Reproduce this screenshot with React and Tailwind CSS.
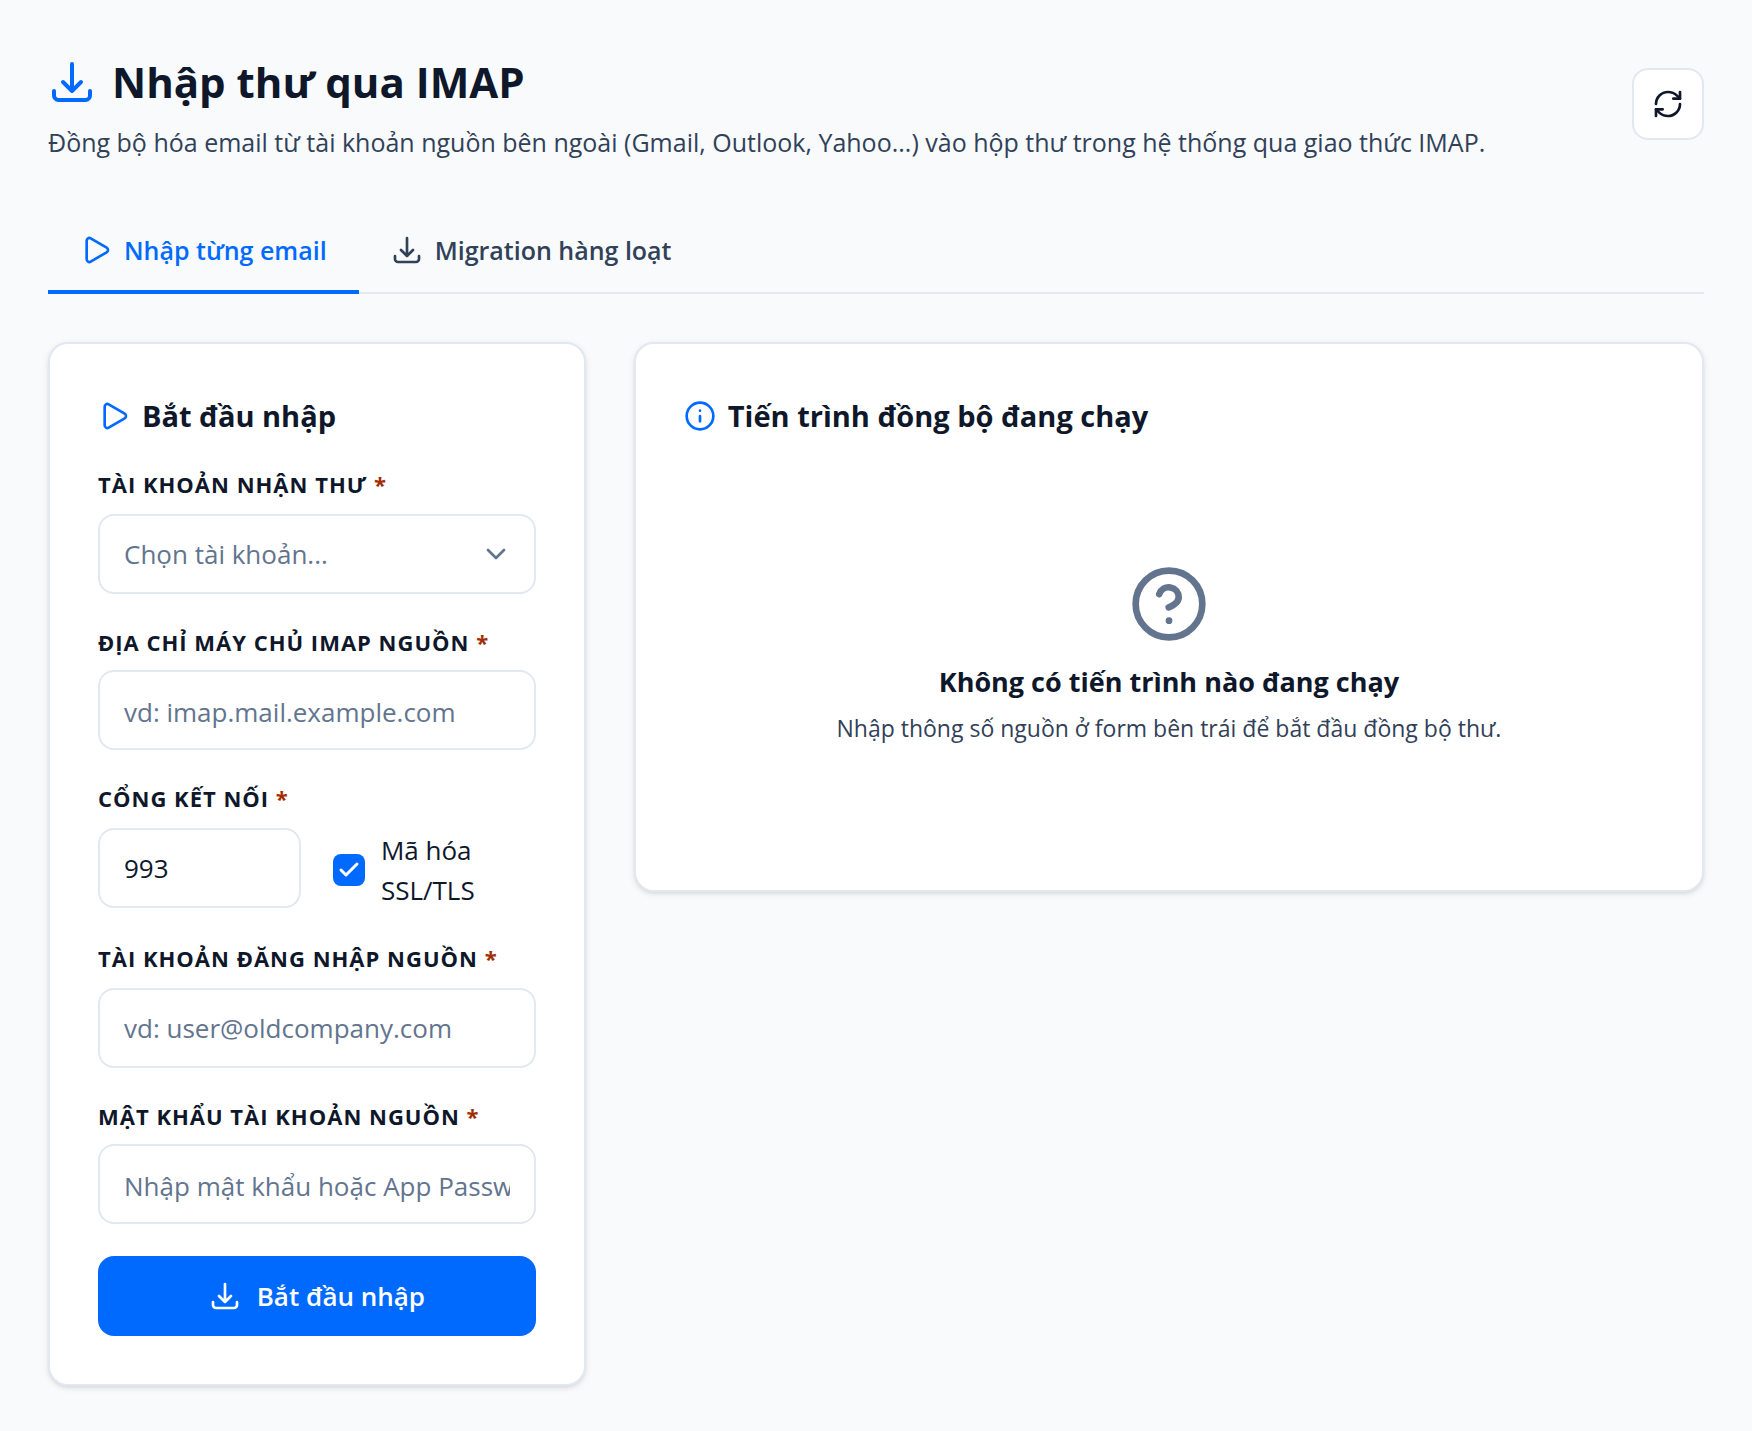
import React from "react";

function Svg({ size, sw = 2, children, className = "" }) {
  return (
    <svg width={size} height={size} viewBox="0 0 24 24" fill="none" stroke="currentColor" strokeWidth={sw} strokeLinecap="round" strokeLinejoin="round" className={"shrink-0 " + className} aria-hidden="true">
      {children}
    </svg>
  );
}
const Download = (p) => (
  <Svg {...p}>
    <path d="M3 16.5v2.25A2.25 2.25 0 0 0 5.25 21h13.5A2.25 2.25 0 0 0 21 18.75V16.5M16.5 12 12 16.5m0 0L7.5 12m4.5 4.5V3" />
  </Svg>
);
const Play = (p) => (
  <Svg {...p}>
    <path d="M5 5a2 2 0 0 1 3.008-1.728l11.997 6.998a2 2 0 0 1 .003 3.458l-12 7A2 2 0 0 1 5 19z" />
  </Svg>
);

function Label({ htmlFor, children }) {
  return (
    <label htmlFor={htmlFor} className="block text-[22px] leading-8 font-bold uppercase tracking-[1px] text-slate-900">
      {children} <span className="text-orange-800">*</span>
    </label>
  );
}
const field =
  "block h-20 w-full rounded-2xl border-2 border-slate-200 bg-white px-6 text-[26px] placeholder:text-slate-500 outline-none";
const card =
  "rounded-[20px] border-2 border-slate-200 bg-white p-12 shadow-[0_2px_6px_rgb(0_0_0/0.1),0_2px_4px_-2px_rgb(0_0_0/0.1)]";

export default function App() {
  return (
    <main className="min-h-screen bg-slate-50 px-12 pt-12 pb-11 font-['Open_Sans','Noto_Sans',sans-serif] text-slate-900">
      <header className="flex items-center justify-between">
        <div>
          <h1 className="flex items-center gap-4 text-[42px] leading-[68px] font-bold">
            <Download size={48} className="text-[#006aff]" />
            Nhập thư qua IMAP
          </h1>
          <p className="mt-2 text-[25px] leading-9 text-slate-700">
            Đồng bộ hóa email từ tài khoản nguồn bên ngoài (Gmail, Outlook, Yahoo...) vào hộp thư trong hệ thống qua giao thức IMAP.
          </p>
        </div>
        <button aria-label="Làm mới" className="flex size-18 items-center justify-center rounded-2xl border-2 border-slate-200 bg-white">
          <Svg size={32}>
            <path d="M3 12a9 9 0 0 1 9-9 9.75 9.75 0 0 1 6.74 2.74L21 8" />
            <path d="M21 3v5h-5" />
            <path d="M21 12a9 9 0 0 1-9 9 9.75 9.75 0 0 1-6.74-2.74L3 16" />
            <path d="M8 16H3v5" />
          </Svg>
        </button>
      </header>

      <nav className="mt-12 flex border-b-2 border-slate-200 text-[25px] leading-9 font-semibold">
        <button className="-mb-0.5 flex items-center gap-3 border-b-4 border-[#006aff] px-8 pt-6 pb-[22px] text-[#006aff]">
          <Play size={32} />
          Nhập từng email
        </button>
        <button className="-mb-0.5 flex items-center gap-3 border-b-4 border-transparent px-8 pt-6 pb-[22px] text-slate-700">
          <Download size={32} />
          Migration hàng loạt
        </button>
      </nav>

      <div className="mt-12 grid grid-cols-[minmax(0,1fr)_minmax(0,1.99fr)] items-start gap-12">
        <section className={card}>
          <h2 className="flex items-center gap-3 text-[29px] leading-12 font-bold">
            <Play size={32} className="text-[#006aff]" />
            Bắt đầu nhập
          </h2>
          <form className="mt-7 flex flex-col gap-8" onSubmit={(e) => e.preventDefault()}>
            <div className="flex flex-col gap-3.5">
              <Label htmlFor="acct">Tài khoản nhận thư</Label>
              <div className="relative">
                <select id="acct" className={field + " appearance-none text-slate-500"}>
                  <option>Chọn tài khoản...</option>
                </select>
                <Svg size={32} className="pointer-events-none absolute top-6 right-6 text-slate-500">
                  <path d="m6 9 6 6 6-6" />
                </Svg>
              </div>
            </div>
            <div className="flex flex-col gap-3">
              <Label htmlFor="host">Địa chỉ máy chủ IMAP nguồn</Label>
              <input id="host" placeholder="vd: imap.mail.example.com" className={field + " pt-1"} />
            </div>
            <div className="flex flex-col gap-3.5">
              <Label htmlFor="port">Cổng kết nối</Label>
              <div className="grid grid-cols-2 items-start gap-8">
                <input id="port" defaultValue="993" className={field} />
                <label className="flex items-center gap-4 pt-0.5 text-[26px] leading-10">
                  <span className="relative flex size-8 shrink-0">
                    <input type="checkbox" defaultChecked className="size-8 appearance-none rounded-lg bg-[#006aff]" />
                    <Svg size={24} sw={3} className="pointer-events-none absolute top-1 left-1 text-white">
                      <path d="M20 6 9 17l-5-5" />
                    </Svg>
                  </span>
                  Mã hóa SSL/TLS
                </label>
              </div>
            </div>
            <div className="flex flex-col gap-3.5">
              <Label htmlFor="user">Tài khoản đăng nhập nguồn</Label>
              <input id="user" placeholder="vd: user@oldcompany.com" className={field} />
            </div>
            <div className="flex flex-col gap-3">
              <Label htmlFor="pass">Mật khẩu tài khoản nguồn</Label>
              <input id="pass" type="password" placeholder="Nhập mật khẩu hoặc App Password" className={field + " pt-1"} />
            </div>
            <button className="flex h-20 w-full items-center justify-center gap-4 rounded-2xl bg-[#006aff] text-[26px] font-semibold text-white">
              <Download size={32} />
              Bắt đầu nhập
            </button>
          </form>
        </section>

        <section className={card}>
          <h2 className="flex items-center gap-3 text-[29px] leading-12 font-bold">
            <Svg size={32} className="text-[#006aff]">
              <circle cx="12" cy="12" r="10" />
              <path d="M12 12v4M12 8h.01" />
            </Svg>
            Tiến trình đồng bộ đang chạy
          </h2>
          <div className="flex flex-col items-center pt-31 pb-24 text-center">
            <Svg size={80} className="text-slate-500">
              <circle cx="12" cy="12" r="10" />
              <path d="M9.09 9a3 3 0 0 1 5.83 1c0 2-3 3-3 3M12 17h.01" />
            </Svg>
            <h3 className="mt-[18px] text-[27px] leading-10 font-bold">Không có tiến trình nào đang chạy</h3>
            <p className="mt-2 text-[23px] leading-9 text-slate-700">Nhập thông số nguồn ở form bên trái để bắt đầu đồng bộ thư.</p>
          </div>
        </section>
      </div>
    </main>
  );
}
